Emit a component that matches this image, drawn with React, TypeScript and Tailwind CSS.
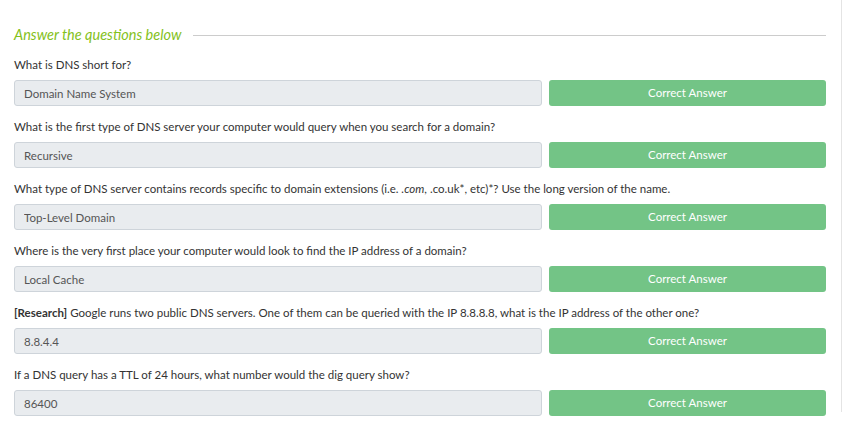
import React from 'react';

interface Question {
  id: number;
  text: React.ReactNode;
  answer: string;
}

const questions: Question[] = [
  { id: 1, text: 'What is DNS short for?', answer: 'Domain Name System' },
  {
    id: 2,
    text: 'What is the first type of DNS server your computer would query when you search for a domain?',
    answer: 'Recursive',
  },
  {
    id: 3,
    text: (
      <>
        What type of DNS server contains records specific to domain extensions (i.e. <em>.com</em>, .co.uk*, etc)*? Use
        the long version of the name.
      </>
    ),
    answer: 'Top-Level Domain',
  },
  {
    id: 4,
    text: 'Where is the very first place your computer would look to find the IP address of a domain?',
    answer: 'Local Cache',
  },
  {
    id: 5,
    text: (
      <>
        <span className="font-bold">[Research]</span> Google runs two public DNS servers. One of them can be queried
        with the IP 8.8.8.8, what is the IP address of the other one?
      </>
    ),
    answer: '8.8.4.4',
  },
  {
    id: 6,
    text: 'If a DNS query has a TTL of 24 hours, what number would the dig query show?',
    answer: '86400',
  },
];

const App: React.FC = () => {
  return (
    <div
      className="w-[844px] h-[427px] overflow-hidden bg-white"
      style={{ fontFamily: 'Lato, "Open Sans", sans-serif' }}
    >
      <div className="w-[842px] h-full border-r border-[#e4e4e4] pl-[14px] pr-[15px]">
        {/* tail of the paragraph above, scrolled mostly out of view */}
        <p className="-mt-[15px] h-[15px] text-[11.5px] leading-[16px] text-[#333] whitespace-nowrap">
          Using the example given above, try going through the steps and answer the questions below.
        </p>

        <div className="mt-[25px] flex items-center h-[20px]">
          <h4 className="text-[14.5px] italic text-[#84c11b] whitespace-nowrap">Answer the questions below</h4>
          <div className="ml-[12px] flex-1 h-px bg-[#cccccc]" />
        </div>

        <div className="mt-[10px]">
          {questions.map(q => (
            <div key={q.id} className="mb-[11px]">
              <p className="h-[20px] leading-[20px] text-[11.5px] text-[#333] whitespace-nowrap">{q.text}</p>
              <div className="mt-[5px] flex gap-[7px]">
                <input
                  type="text"
                  disabled
                  value={q.answer}
                  className="w-[528px] h-[26px] px-[9px] text-[11.5px] text-[#555] bg-[#e9ecef] border border-[#ced4da] rounded-[3px]"
                />
                <button className="flex-1 h-[26px] rounded-[3px] bg-[#73c486] text-white text-[11.5px]">
                  Correct Answer
                </button>
              </div>
            </div>
          ))}
        </div>
      </div>
    </div>
  );
};

export default App;
